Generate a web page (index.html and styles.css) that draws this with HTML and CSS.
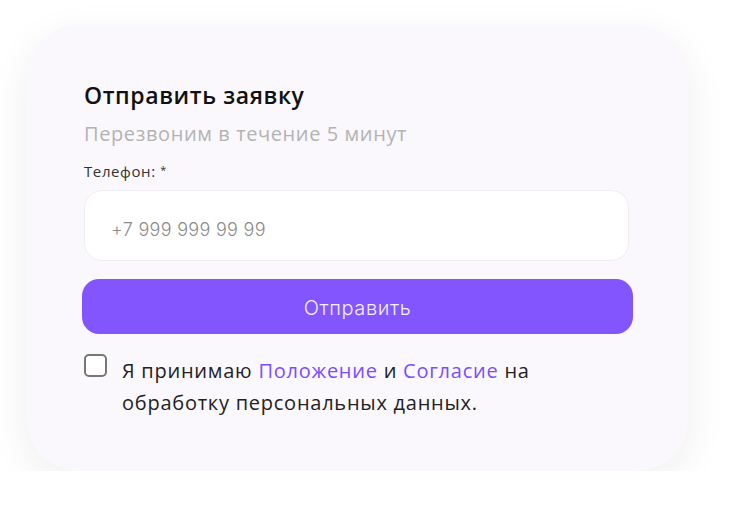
FILE: index.html
```html
<!DOCTYPE html>
<html lang="ru">
<head>
<meta charset="utf-8">
<title>Отправить заявку</title>
<link rel="stylesheet" href="styles.css">
</head>
<body>
<form class="card">
  <h2 class="title">Отправить заявку</h2>
  <p class="subtitle">Перезвоним в течение 5 минут</p>
  <label class="label" for="phone">Телефон: <span class="req">*</span></label>
  <input class="input" id="phone" type="tel" placeholder="+7 999 999 99 99">
  <button class="button" type="button">Отправить</button>
  <div class="agree">
    <span class="box"></span>
    <p class="agree-text">Я принимаю <a class="link" href="#">Положение</a> и <a class="link" href="#">Согласие</a> на<br>обработку персональных данных.</p>
  </div>
</form>
</body>
</html>
```
FILE: styles.css
```css
html, body {
  margin: 0;
  padding: 0;
  background: #ffffff;
}
body {
  padding: 25px 0 0 27px;
  font-family: "Open Sans", "Lato", sans-serif;
}
.card {
  box-sizing: border-box;
  width: 661px;
  height: 446px;
  padding: 55px 57px 0 57px;
  background: #faf8fd;
  border-radius: 52px;
  box-shadow: 0 12px 40px rgba(40, 30, 60, 0.07);
  display: flex;
  flex-direction: column;
}
.title {
  margin: 0;
  font-size: 23px;
  line-height: 30px;
  font-weight: 600;
  color: #111111;
  letter-spacing: 0.6px;
}
.subtitle {
  margin: 11px 0 0;
  font-size: 20px;
  line-height: 26px;
  font-weight: 400;
  color: #b3b3b3;
  letter-spacing: 0.6px;
}
.label {
  margin-top: 13px;
  font-size: 15px;
  line-height: 20px;
  color: #333333;
  letter-spacing: 0.6px;
}
.req {
  font-size: 11px;
  vertical-align: 3px;
}
.input {
  box-sizing: border-box;
  margin-top: 9px;
  height: 71px;
  width: 545px;
  padding: 7px 26px 0;
  border: 1px solid #efedf2;
  border-radius: 18px;
  background: #ffffff;
  font-family: "Inter", sans-serif;
  font-size: 18px;
  letter-spacing: 0.3px;
  color: #333;
  outline: none;
}
.input::placeholder {
  color: #8a8a8a;
  font-weight: 300;
}
.button {
  margin: 18px -2px 0;
  height: 55px;
  padding-top: 3px;
  border: none;
  border-radius: 17px;
  background: #8255ff;
  color: #f4f0ff;
  font-family: "Inter", sans-serif;
  font-size: 20px;
  font-weight: 300;
  letter-spacing: 0.6px;
  cursor: pointer;
}
.agree {
  display: flex;
  gap: 15px;
  margin-top: 20px;
}
.box {
  flex: none;
  box-sizing: border-box;
  width: 23px;
  height: 23px;
  border: 2px solid #777777;
  border-radius: 5px;
  background: #ffffff;
}
.agree-text {
  margin: 0;
  margin-top: 1px;
  font-size: 20px;
  line-height: 32px;
  color: #222222;
  letter-spacing: 0.75px;
}
.link {
  color: #7b4dff;
  text-decoration: none;
}
```
